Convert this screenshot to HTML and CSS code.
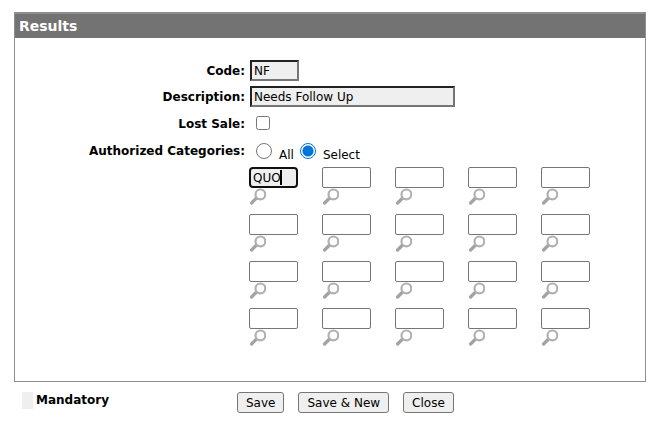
FILE: index.html
```
<!DOCTYPE html>
<html lang="en">
<head>
<meta charset="utf-8">
<title>Results</title>
<link rel="stylesheet" href="styles.css">
</head>
<body>
<svg class="symbols" aria-hidden="true">
  <symbol id="lens" viewBox="0 0 17 17">
    <path d="M2.6 15 7.6 10" stroke="#a3a3a3" stroke-width="3.2" stroke-linecap="round"/>
    <circle cx="11.4" cy="6.4" r="4.9" fill="#fff" stroke="#b0b0b0" stroke-width="2.2"/>
  </symbol>
</svg>
<form>
  <section class="panel">
    <h1 class="title">Results</h1>
    <div class="fields">
      <label class="label" for="code">Code:</label>
      <input class="text required short" id="code" value="NF">
      <label class="label" for="description">Description:</label>
      <input class="text required long" id="description" value="Needs Follow Up">
      <label class="label" for="lost">Lost Sale:</label>
      <input class="check" type="checkbox" id="lost">
      <span class="label" id="categories">Authorized Categories:</span>
      <div class="choices" role="radiogroup" aria-labelledby="categories">
        <input class="radio" type="radio" name="scope" id="all"><label class="choice" for="all">All</label>
        <input class="radio" type="radio" name="scope" id="select" checked><label class="choice" for="select">Select</label>
      </div>
      <div class="codes" id="codes"></div>
    </div>
  </section>
  <footer class="footer">
    <div class="legend"><span class="swatch"></span>Mandatory</div>
    <div class="actions">
      <button class="button" type="button">Save</button>
      <button class="button" type="button">Save &amp; New</button>
      <button class="button" type="button">Close</button>
    </div>
  </footer>
</form>
<script src="script.js"></script>
</body>
</html>
```
FILE: styles.css
```
* { box-sizing: border-box; }
body {
  margin: 12px 16px 8px 14px;
  background: #fff;
  color: #000;
  font: 12px/16px "DejaVu Sans", sans-serif;
}
.symbols {
  display: block;
  width: 0;
  height: 0;
}
.panel {
  border: 1px solid #8e8e8e;
  border-top-width: 2px;
  padding-bottom: 35px;
}
.title {
  margin: 0;
  padding: 0 4px;
  background: #737373;
  color: #fff;
  font: bold 14px/24px "DejaVu Sans", sans-serif;
}
.fields {
  display: grid;
  grid-template-columns: 230px 1fr;
  column-gap: 5px;
  row-gap: 5px;
  align-items: center;
  justify-items: start;
  padding-top: 22px;
}
.label {
  justify-self: end;
  font-weight: bold;
}
.text {
  height: 21px;
  margin: 0;
  padding: 0 2px;
  border: 1px solid #767676;
  border-radius: 2px;
  background: #fff;
  color: #000;
  font: inherit;
}
.required {
  border: 2px solid;
  border-color: #222 #767676 #767676 #222;
  border-radius: 0;
  background: #efefef;
}
.short { width: 49px; }
.long { width: 205px; }
.check {
  width: 14px;
  height: 14px;
  margin: 4px 6px 5px;
}
.choices {
  display: flex;
  align-items: center;
  height: 22px;
}
.radio {
  appearance: none;
  width: 16px;
  height: 16px;
  margin: 0 7px 0 6px;
  border: 1px solid #767676;
  border-radius: 50%;
  background: #fff;
}
.radio:checked {
  border-color: #0075db;
  background: radial-gradient(circle, #0075db 5px, #fff 6px);
}
.choice { padding-top: 7px; }
.codes {
  grid-column: 2;
  display: grid;
  grid-template-columns: repeat(5, 49px);
  gap: 9px 24px;
  margin-left: -1px;
}
.entry { position: relative; }
.entry .text {
  display: block;
  width: 100%;
}
.entry .current {
  border: 2px solid #101010;
  border-radius: 4px;
  background: #efefef;
  outline: none;
}
.caret {
  position: absolute;
  top: 3px;
  left: 31px;
  width: 2px;
  height: 15px;
  background: #000;
}
.lookup {
  display: block;
  width: 17px;
  height: 17px;
  margin: 0;
  padding: 0;
  border: 0;
  background: none;
}
.lookup svg {
  display: block;
  width: 17px;
  height: 17px;
}
.footer {
  display: flex;
  align-items: flex-start;
  padding: 10px 8px 0;
}
.legend {
  display: flex;
  gap: 3px;
  width: 215px;
  font-weight: bold;
}
.swatch {
  width: 11px;
  height: 17px;
  background: #efefef;
}
.actions {
  display: flex;
  gap: 14px;
}
.button {
  height: 21px;
  margin: 0;
  padding: 0 8px;
  border: 1px solid #767676;
  border-radius: 3px;
  background: #efefef;
  color: #000;
  font: inherit;
}
```
FILE: script.js
```
const values = ["QUO"];
const codes = document.getElementById("codes");
for (let i = 0; i < 20; i++) {
  const value = values[i] || "";
  codes.insertAdjacentHTML("beforeend", `
    <div class="entry">
      <input class="text${value ? " current" : ""}" aria-label="Category ${i + 1}" value="${value}">
      ${value ? '<span class="caret"></span>' : ""}
      <button class="lookup" type="button" aria-label="Look up category ${i + 1}"><svg><use href="#lens"/></svg></button>
    </div>`);
}
```
